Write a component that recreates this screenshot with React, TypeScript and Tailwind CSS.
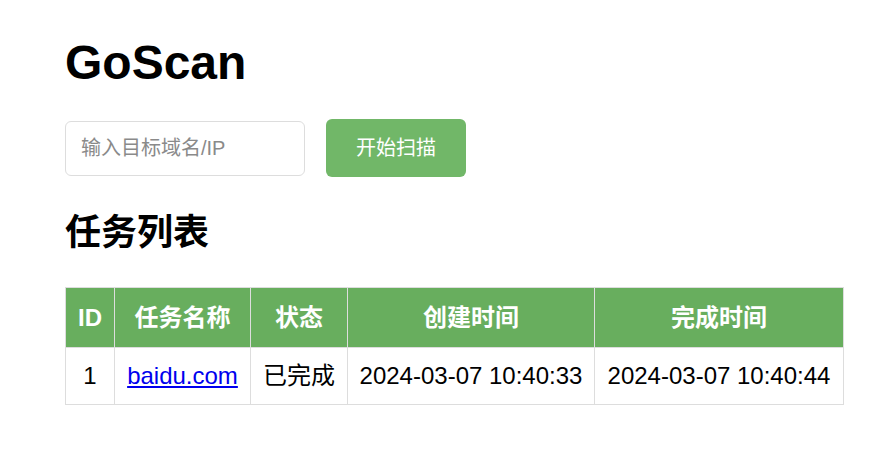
const tasks = [
  {
    id: 1,
    name: "baidu.com",
    status: "已完成",
    createdAt: "2024-03-07 10:40:33",
    finishedAt: "2024-03-07 10:40:44",
  },
];

export default function App() {
  return (
    <div className="min-h-[472px] bg-white pl-[65px] pt-[35px] font-['Liberation_Sans','Noto_Sans_CJK_SC',sans-serif] text-black">
      <h1 className="text-[48px] font-bold leading-[56px]">GoScan</h1>

      <div className="mt-[28px] flex items-center gap-[21px]">
        <input
          className="h-[55px] w-[240px] rounded-[6px] border border-[#dddddd] px-[15px] text-[20px] outline-none placeholder:text-[#8a8a8a]"
          placeholder="输入目标域名/IP"
        />
        <button className="h-[58px] w-[140px] rounded-[6px] bg-[#71b768] text-[20px] text-white">
          开始扫描
        </button>
      </div>

      <h2 className="mt-[32px] text-[36px] font-bold leading-[48px]">任务列表</h2>

      <table className="mt-[30px] w-[779px] table-fixed border-collapse whitespace-nowrap text-[24px]">
        <thead>
          <tr className="h-[60px] bg-[#68ae5e] text-white">
            <th className="w-[49px] border border-[#dddddd] font-bold">ID</th>
            <th className="w-[136px] border border-[#dddddd] font-bold">任务名称</th>
            <th className="w-[97px] border border-[#dddddd] font-bold">状态</th>
            <th className="w-[247px] border border-[#dddddd] font-bold">创建时间</th>
            <th className="w-[249px] border border-[#dddddd] font-bold">完成时间</th>
          </tr>
        </thead>
        <tbody>
          {tasks.map((t) => (
            <tr className="h-[57px] text-center" key={t.id}>
              <td className="border border-[#dddddd]">{t.id}</td>
              <td className="border border-[#dddddd]">
                <a className="text-[#0000ee] underline" href="#">
                  {t.name}
                </a>
              </td>
              <td className="border border-[#dddddd]">{t.status}</td>
              <td className="border border-[#dddddd]">{t.createdAt}</td>
              <td className="border border-[#dddddd]">{t.finishedAt}</td>
            </tr>
          ))}
        </tbody>
      </table>
    </div>
  );
}
